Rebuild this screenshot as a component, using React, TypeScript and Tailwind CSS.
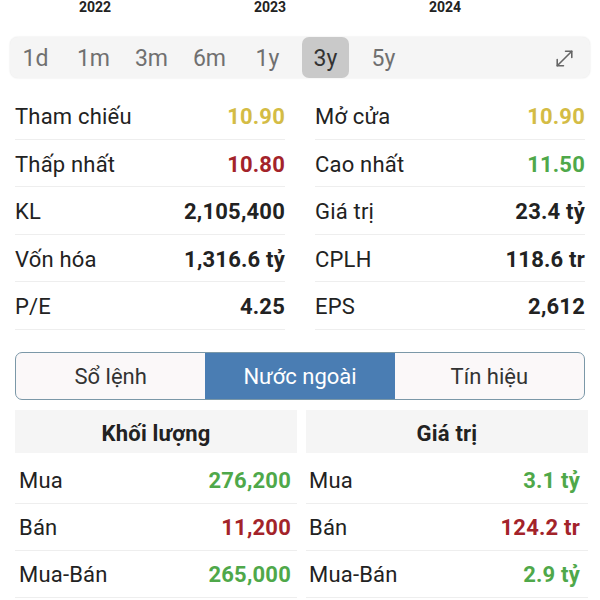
import React from "react";
import { MoveDiagonal } from "lucide-react";

const stats: [string, string, string, string, string, string][] = [
  ["Tham chiếu", "10.90", "text-[#d4bc45]", "Mở cửa", "10.90", "text-[#d4bc45]"],
  ["Thấp nhất", "10.80", "text-[#a3232a]", "Cao nhất", "11.50", "text-[#4fa84a]"],
  ["KL", "2,105,400", "text-[#222]", "Giá trị", "23.4 tỷ", "text-[#222]"],
  ["Vốn hóa", "1,316.6 tỷ", "text-[#222]", "CPLH", "118.6 tr", "text-[#222]"],
  ["P/E", "4.25", "text-[#222]", "EPS", "2,612", "text-[#222]"],
];

const foreign: [string, string, string, string, string][] = [
  ["Mua", "276,200", "3.1 tỷ", "text-[#4fa84a]", "text-[#4fa84a]"],
  ["Bán", "11,200", "124.2 tr", "text-[#a3232a]", "text-[#a3232a]"],
  ["Mua-Bán", "265,000", "2.9 tỷ", "text-[#4fa84a]", "text-[#4fa84a]"],
];

const ranges = ["1d", "1m", "3m", "6m", "1y", "3y", "5y"];

export default function App() {
  return (
    <div
      className="w-[600px] h-[600px] bg-white overflow-hidden text-[#222]"
      style={{ fontFamily: "Roboto, 'Noto Sans', sans-serif" }}
    >
      {/* years */}
      <div className="flex h-[15px] pl-[60px] gap-[105px] text-[14px] leading-[15px] font-bold text-[#222]">
        <span className="w-[70px] text-center">2022</span>
        <span className="w-[70px] text-center">2023</span>
        <span className="w-[70px] text-center">2024</span>
      </div>

      {/* range bar */}
      <div className="mt-[22px] mx-[10px] h-[41px] rounded-[8px] bg-[#f5f5f5] shadow-[0_0_2px_rgba(0,0,0,0.12)] flex items-center pl-[2px] pr-[13px]">
        <div className="flex gap-[11px] h-full">
          {ranges.map((r) => (
            <div
              key={r}
              className={`w-[47px] h-full pt-[3px] flex items-center justify-center text-[23px] rounded-[7px] ${
                r === "3y" ? "bg-[#c9c9c9] text-[#333]" : "text-[#707070]"
              }`}
            >
              {r}
            </div>
          ))}
        </div>
        <div className="ml-auto text-[#666] pt-[1px]">
          <MoveDiagonal size={25} strokeWidth={1.5} />
        </div>
      </div>

      {/* stats */}
      <div className="mt-[14px] px-[15px] grid grid-cols-2 gap-x-[30px] text-[22px] tracking-[0.2px]">
        <div className="flex flex-col">
          {stats.map((s) => (
            <div key={s[0]} className="h-[47.5px] pt-[3px] border-b border-[#eeeeee] flex items-center justify-between">
              <span className="text-[#222]">{s[0]}</span>
              <span className={`font-bold ${s[2]}`}>{s[1]}</span>
            </div>
          ))}
        </div>
        <div className="flex flex-col">
          {stats.map((s) => (
            <div key={s[3]} className="h-[47.5px] pt-[3px] border-b border-[#eeeeee] flex items-center justify-between">
              <span className="text-[#222]">{s[3]}</span>
              <span className={`font-bold ${s[5]}`}>{s[4]}</span>
            </div>
          ))}
        </div>
      </div>

      {/* tabs */}
      <div className="mt-[22px] mx-[15px] h-[48px] rounded-[7px] border-[1.5px] border-[#7b98a8] bg-[#fbf8f9] flex overflow-hidden text-[22px]">
        <div className="flex-1 pt-[2px] flex items-center justify-center text-[#333]">Sổ lệnh</div>
        <div className="flex-1 pt-[2px] flex items-center justify-center bg-[#4a7db3] text-white">Nước ngoài</div>
        <div className="flex-1 pt-[2px] flex items-center justify-center text-[#333]">Tín hiệu</div>
      </div>

      {/* foreign */}
      <div className="mt-[10px] px-[15px] grid grid-cols-2 gap-x-[9px] pr-[12px] text-[22px] tracking-[0.2px]">
        <div className="flex flex-col">
          <div className="h-[43px] pt-[4px] bg-[#f5f5f5] flex items-center justify-center font-bold text-[#222]">Khối lượng</div>
          <div className="h-[4px]" />
          {foreign.map((f) => (
            <div key={f[0]} className="h-[47px] pt-[2px] border-b border-[#eeeeee] flex items-center justify-between pl-[4px] pr-[6px]">
              <span>{f[0]}</span>
              <span className={`font-bold ${f[3]}`}>{f[1]}</span>
            </div>
          ))}
        </div>
        <div className="flex flex-col">
          <div className="h-[43px] pt-[4px] bg-[#f5f5f5] flex items-center justify-center font-bold text-[#222]">Giá trị</div>
          <div className="h-[4px]" />
          {foreign.map((f) => (
            <div key={f[0]} className="h-[47px] pt-[2px] border-b border-[#eeeeee] flex items-center justify-between pl-[3px] pr-[8px]">
              <span>{f[0]}</span>
              <span className={`font-bold ${f[4]}`}>{f[2]}</span>
            </div>
          ))}
        </div>
      </div>
    </div>
  );
}
